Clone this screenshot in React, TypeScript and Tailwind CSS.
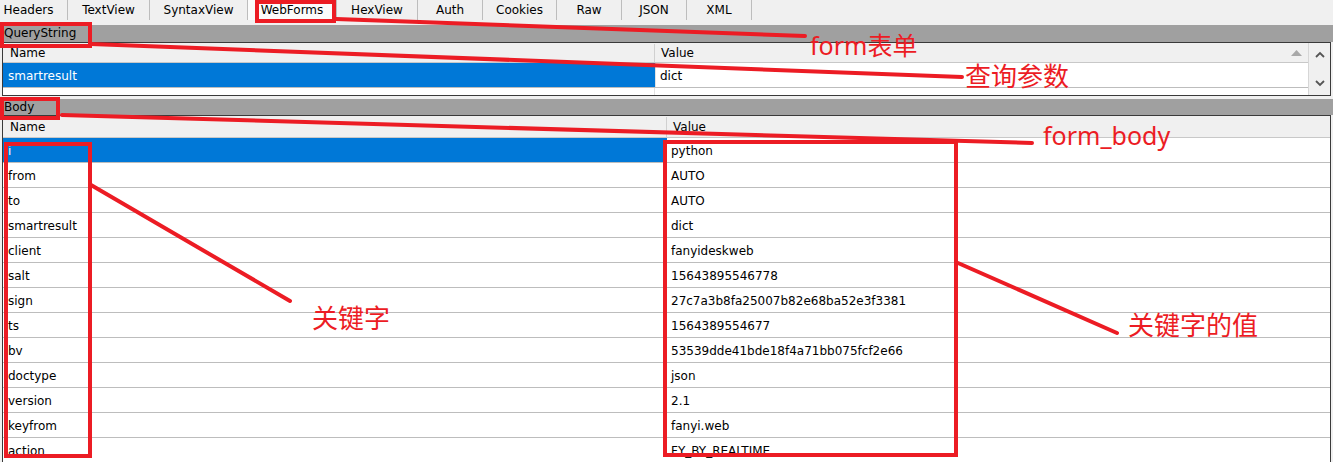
import React from 'react';

const tabs: { label: string; w: number; active?: boolean; extra?: string }[] = [
  { label: 'Headers', w: 68, extra: 'pr-[10px]' },
  { label: 'TextView', w: 82 },
  { label: 'SyntaxView', w: 98 },
  { label: 'WebForms', w: 89, active: true },
  { label: 'HexView', w: 81 },
  { label: 'Auth', w: 65 },
  { label: 'Cookies', w: 74 },
  { label: 'Raw', w: 65 },
  { label: 'JSON', w: 65 },
  { label: 'XML', w: 65 },
];

const bodyRows: [string, string][] = [
  ['i', 'python'],
  ['from', 'AUTO'],
  ['to', 'AUTO'],
  ['smartresult', 'dict'],
  ['client', 'fanyideskweb'],
  ['salt', '15643895546778'],
  ['sign', '27c7a3b8fa25007b82e68ba52e3f3381'],
  ['ts', '1564389554677'],
  ['bv', '53539dde41bde18f4a71bb075fcf2e66'],
  ['doctype', 'json'],
  ['version', '2.1'],
  ['keyfrom', 'fanyi.web'],
  ['action', 'FY_BY_REALTIME'],
];

function Annotations() {
  const red = '#ec1c24';
  return (
    <svg
      className="absolute left-0 top-0 pointer-events-none"
      width={1333}
      height={462}
      viewBox="0 0 1333 462"
    >
      <g fill="none" stroke={red} strokeWidth={4}>
        <rect x={257} y={2} width={77} height={19} />
        <rect x={2} y={24} width={88} height={22} />
        <rect x={2} y={99} width={56} height={19} />
        <rect x={6} y={144} width={84} height={312} />
        <rect x={665} y={142} width={291} height={313} />
      </g>
      <g stroke={red} strokeWidth={4} strokeLinecap="round">
        <line x1={336} y1={19} x2={805} y2={36} />
        <line x1={91} y1={44} x2={962} y2={77} />
        <line x1={62} y1={115} x2={1032} y2={143} />
        <line x1={91} y1={185} x2={290} y2={301} />
        <line x1={958} y1={263} x2={1117} y2={333} />
      </g>
    </svg>
  );
}

const labelFont = "font-['Noto_Sans','Noto_Sans_CJK_SC',sans-serif] text-[#ec1c24]";

export default function App() {
  return (
    <div className="relative w-[1333px] h-[462px] overflow-hidden bg-[#f0f0f0] font-['DejaVu_Sans',sans-serif] text-[12px] text-black">
      {/* Tab bar */}
      <div className="flex h-[25px] items-start">
        {tabs.map((t) => (
          <div
            key={t.label}
            style={{ width: t.w }}
            className={`h-[20px] flex items-center justify-center border-r border-[#bdbdbd] ${
              t.active ? 'bg-[#fbfbfb]' : ''
            } ${t.extra ?? ''}`}
          >
            {t.label}
          </div>
        ))}
      </div>

      {/* QueryString section */}
      <div className="h-[17px] bg-[#a0a0a0] pl-[4px] leading-[17px]">QueryString</div>
      <div className="ml-[2px] w-[1329px] h-[54px] border border-[#3a3a3a] flex bg-white">
        <div className="flex-1 flex flex-col">
          <div className="h-[20px] flex bg-[#f0f0f0] border-b border-[#c8c8c8] pt-[1px]">
            <div className="w-[652px] pl-[7px] flex items-center border-r border-[#d0d0d0]">Name</div>
            <div className="flex-1 pl-[6px] pr-[6px] flex items-center justify-between">
              <span>Value</span>
              <svg width="11" height="6" viewBox="0 0 11 6">
                <polygon points="0,6 5.5,0 11,6" fill="#a8a8a8" />
              </svg>
            </div>
          </div>
          <div className="h-[25px] flex border-b border-[#bdbdbd]">
            <div className="w-[652px] pl-[5px] pt-[2px] flex items-center bg-[#0078d7] text-white">smartresult</div>
            <div className="flex-1 pl-[4px] pt-[2px] flex items-center border-l border-[#e2e2e2]">dict</div>
          </div>
          <div className="flex-1 flex">
            <div className="w-[652px] border-r border-[#e2e2e2]" />
          </div>
        </div>
        <div className="w-[22px] bg-[#f0f0f0] border-l border-[#d6d6d6] flex flex-col items-center justify-between py-[8px]">
          <svg width="10" height="7" viewBox="0 0 10 7">
            <polyline points="1,6 5,2 9,6" fill="none" stroke="#555" strokeWidth="1.8" />
          </svg>
          <svg width="10" height="7" viewBox="0 0 10 7">
            <polyline points="1,1 5,5 9,1" fill="none" stroke="#555" strokeWidth="1.8" />
          </svg>
        </div>
      </div>

      {/* Body section */}
      <div className="h-[3px]" />
      <div className="h-[16px] bg-[#a0a0a0] pl-[4px] leading-[17px]">Body</div>
      <div className="ml-[2px] w-[1329px] h-[400px] border border-[#3a3a3a] bg-white flex flex-col">
        <div className="h-[22px] shrink-0 flex bg-[#f0f0f0] border-b border-[#c8c8c8] pt-[1px]">
          <div className="w-[664px] pl-[7px] flex items-center border-r border-[#d0d0d0]">Name</div>
          <div className="flex-1 pl-[6px] flex items-center">Value</div>
        </div>
        {bodyRows.map(([k, v], i) => (
          <div key={k} className="h-[25px] shrink-0 flex border-b border-[#bdbdbd]">
            <div
              className={`w-[664px] pl-[5px] pt-[2px] flex items-center ${
                i === 0 ? 'bg-[#0078d7] text-white' : ''
              }`}
            >
              {k}
            </div>
            <div className="flex-1 pl-[4px] pt-[2px] flex items-center">{v}</div>
          </div>
        ))}
      </div>

      <Annotations />

      <div className={`absolute left-[810px] top-[31px] text-[25px] leading-[28px] ${labelFont}`}>form表单</div>
      <div className={`absolute left-[965px] top-[62px] text-[26px] leading-[28px] ${labelFont}`}>查询参数</div>
      <div className={`absolute left-[1043px] top-[121px] text-[25px] leading-[28px] ${labelFont}`}>form_body</div>
      <div className={`absolute left-[312px] top-[304px] text-[26px] leading-[28px] ${labelFont}`}>关键字</div>
      <div className={`absolute left-[1128px] top-[311px] text-[26px] leading-[28px] ${labelFont}`}>关键字的值</div>
    </div>
  );
}
